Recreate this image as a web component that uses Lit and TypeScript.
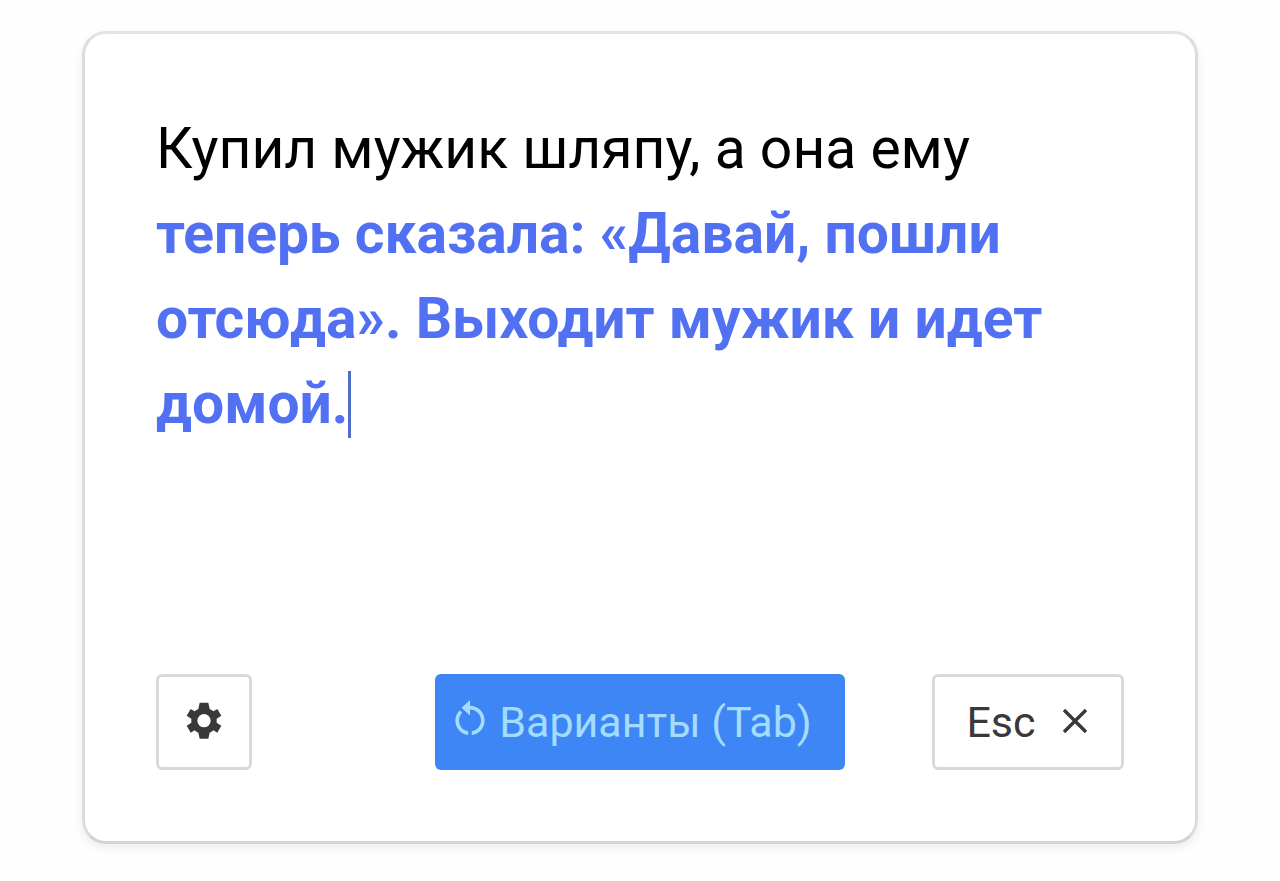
import { LitElement, html, css } from "lit";
import { customElement } from "lit/decorators.js";

@customElement("app-root")
class AppRoot extends LitElement {
  static styles = css`
    :host { display: block; box-sizing: border-box; min-height: 100vh; padding: 31px 82px 36px; background: #fefefe; font-family: Roboto, sans-serif; color: #000; }
    * { box-sizing: border-box; }
    .card { display: flex; flex-direction: column; justify-content: space-between; gap: 96px; min-height: 813px; padding: 72px 71px 71px; border: 3px solid #dcdcdd; border-top-color: #e3e3e4; border-bottom-color: #d4d4d5; border-radius: 24px; background: #fff; box-shadow: 0 4px 10px #00000012; }
    .text { margin: 0; font-size: 57px; line-height: 85px; }
    .added { font-weight: 700; color: #5271f2; }
    .caret { display: inline-block; width: 3px; height: 67px; margin-block: -8px; vertical-align: -7px; background: #506fcb; }
    .actions { display: grid; grid-template-columns: 1fr auto 1fr; align-items: center; }
    button { display: flex; align-items: center; justify-content: center; height: 96px; padding: 0; border: 3px solid #d9d9da; border-radius: 6px; background: #fff; color: #39393b; font: 400 43px Roboto, sans-serif; }
    .settings { width: 96px; }
    .main { gap: 7px; padding: 0 33px 0 13px; border: 0; background: #3e85f5; color: #a3dcfc; }
    .esc { width: 192px; gap: 24px; justify-self: end; }
    svg { display: block; flex: none; }
  `;
  render() {
    return html`
      <main class="card">
        <p class="text">Купил мужик шляпу, а она ему <span class="added">теперь сказала: «Давай, пошли отсюда». Выходит мужик и идет домой.</span><span class="caret"></span></p>
        <div class="actions">
          <button class="settings" aria-label="Настройки"><svg width="44" height="44" viewBox="-66 -62 132 132" fill="currentColor"><path fill-rule="evenodd" d="M-13-54H13L17-35Q23-33 28-28L40-35 52-15 38-6V6L52 15 40 36 28 29Q23 34 17 36L13 54H-13L-17 36Q-23 34-28 29L-40 36-52 15-38 6V-6L-52-15-40-35-28-28Q-23-33-17-35ZM0 20A20 20 0 1 0 0-20 20 20 0 0 0 0 20Z"/></svg></button>
          <button class="main"><svg width="44" height="44" viewBox="0 1.8 24 24" fill="currentColor"><path d="M12 5V1.8L7.4 6l4.6 4.2V7c3.31 0 6 2.69 6 6 0 2.97-2.17 5.43-5 5.91v2.02c3.95-.49 7-3.85 7-7.93 0-4.42-3.58-8-8-8zM6 13c0-1.65.67-3.15 1.76-4.24L6.34 7.34C4.9 8.79 4 10.79 4 13c0 4.08 3.05 7.44 7 7.93v-2.02c-2.83-.48-5-2.94-5-5.91z"/></svg>Варианты (Tab)</button>
          <button class="esc">Esc<svg width="30" height="30" viewBox="0 1 30 30" fill="none" stroke="currentColor" stroke-width="3.4"><path d="M4 4l22 22M26 4L4 26"/></svg></button>
        </div>
      </main>`;
  }
}
